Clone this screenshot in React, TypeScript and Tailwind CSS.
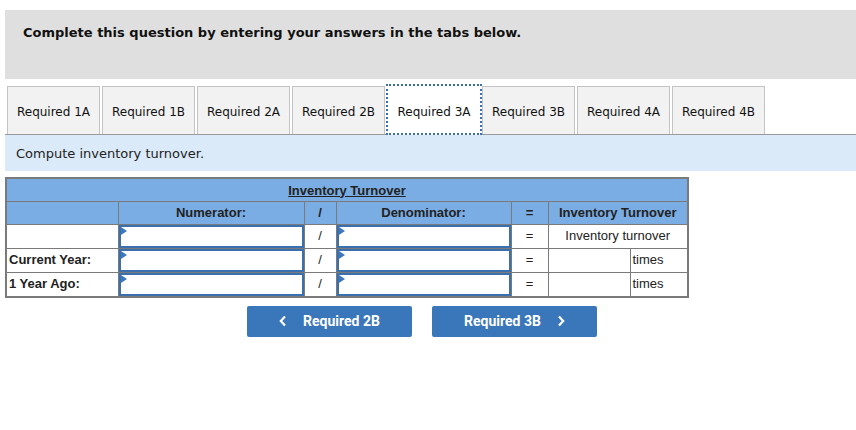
import React from "react";

const tabs = ["Required 1A", "Required 1B", "Required 2A", "Required 2B", "Required 3A", "Required 3B", "Required 4A", "Required 4B"];

function InputCell() {
  return (
    <div className="relative h-[23px] border-2 border-[#3b6fae] bg-white">
      <div className="absolute left-0 top-0 h-0 w-0 border-y-[4px] border-l-[6px] border-y-transparent border-l-[#3b78c0]" />
    </div>
  );
}

export default function App() {
  const rows = [
    { label: "", result: "Inventory turnover", times: false },
    { label: "Current Year:", result: "", times: true },
    { label: "1 Year Ago:", result: "", times: true },
  ];
  return (
    <div className="h-[430px] w-[856px] bg-white pl-[5px] pt-[10px]" style={{ fontFamily: '"DejaVu Sans", Verdana, sans-serif' }}>
      <div className="h-[69px] bg-[#dfdfdf] pl-[18px] pt-[13px] text-[13px] font-bold text-[#111]">
        Complete this question by entering your answers in the tabs below.
      </div>
      <div className="mt-[8px] flex h-[48px] items-end border-b border-[#9a9a9a] pl-[2px]">
        {tabs.map((t, i) =>
          i === 4 ? (
            <div key={t} className="mb-[-1px] ml-[-1px] flex h-[51px] w-[96px] items-center justify-center border-2 border-dotted border-[#3a6fb0] bg-white pt-[4px] text-[12px] text-[#111]">
              {t}
            </div>
          ) : (
            <div key={t} className="mr-[2px] flex h-[48px] w-[93px] items-center justify-center border border-b-0 border-[#c4c4c4] bg-[#f2f2f2] pt-[2px] text-[12px] text-[#111]">
              {t}
            </div>
          )
        )}
      </div>
      <div className="flex h-[36px] items-center bg-[#dbeaf8] pl-[11px] pt-[2px] text-[13px] text-[#222]">Compute inventory turnover.</div>
      <div className="mt-[6px]" style={{ fontFamily: '"Liberation Sans", Arial, sans-serif' }}>
        <table className="border-collapse border-2 border-[#7a7a7a] text-[13px] text-[#222]">
          <colgroup>
            <col className="w-[112px]" />
            <col className="w-[186px]" />
            <col className="w-[32px]" />
            <col className="w-[175px]" />
            <col className="w-[37px]" />
            <col className="w-[82px]" />
            <col className="w-[58px]" />
          </colgroup>
          <tbody>
            <tr className="h-[23px] bg-[#7aade3]">
              <td colSpan={7} className="border border-[#7a7a7a] pt-[1px] text-center font-bold underline">
                Inventory Turnover
              </td>
            </tr>
            <tr className="h-[23px] bg-[#7aade3] font-bold">
              <td className="border border-[#7a7a7a]" />
              <td className="border border-[#7a7a7a] text-center">Numerator:</td>
              <td className="border border-[#7a7a7a] text-center">/</td>
              <td className="border border-[#7a7a7a] text-center">Denominator:</td>
              <td className="border border-[#7a7a7a] text-center">=</td>
              <td colSpan={2} className="border border-[#7a7a7a] text-center">Inventory Turnover</td>
            </tr>
            {rows.map((r, i) => (
              <tr key={i} className="h-[23px] bg-white">
                <td className="border border-[#7a7a7a] pl-[2px] font-bold">{r.label}</td>
                <td className="border border-[#7a7a7a] p-0">
                  <InputCell />
                </td>
                <td className="border border-[#7a7a7a] text-center">/</td>
                <td className="border border-[#7a7a7a] p-0">
                  <InputCell />
                </td>
                <td className="border border-[#7a7a7a] text-center">=</td>
                {r.times ? (
                  <>
                    <td className="border border-[#7a7a7a]" />
                    <td className="border border-[#7a7a7a] pl-[2px]">times</td>
                  </>
                ) : (
                  <td colSpan={2} className="border border-[#7a7a7a] text-center">{r.result}</td>
                )}
              </tr>
            ))}
          </tbody>
        </table>
      </div>
      <div className="mt-[8px] flex gap-[20px] pl-[242px]" style={{ fontFamily: 'Roboto, "Liberation Sans", Arial, sans-serif' }}>
        <button className="flex h-[31px] w-[165px] items-center justify-center gap-[16px] rounded-[2px] bg-[#3a76ba] text-[14px] font-bold text-white">
          <svg width="8" height="12" viewBox="0 0 8 12"><path d="M6 1.5 1.8 6 6 10.5" fill="none" stroke="white" strokeWidth="2.2" /></svg>
          <span>Required 2B</span>
        </button>
        <button className="flex h-[31px] w-[165px] items-center justify-center gap-[16px] rounded-[2px] bg-[#3a76ba] text-[14px] font-bold text-white">
          <span>Required 3B</span>
          <svg width="8" height="12" viewBox="0 0 8 12"><path d="M2 1.5 6.2 6 2 10.5" fill="none" stroke="white" strokeWidth="2.2" /></svg>
        </button>
      </div>
    </div>
  );
}
